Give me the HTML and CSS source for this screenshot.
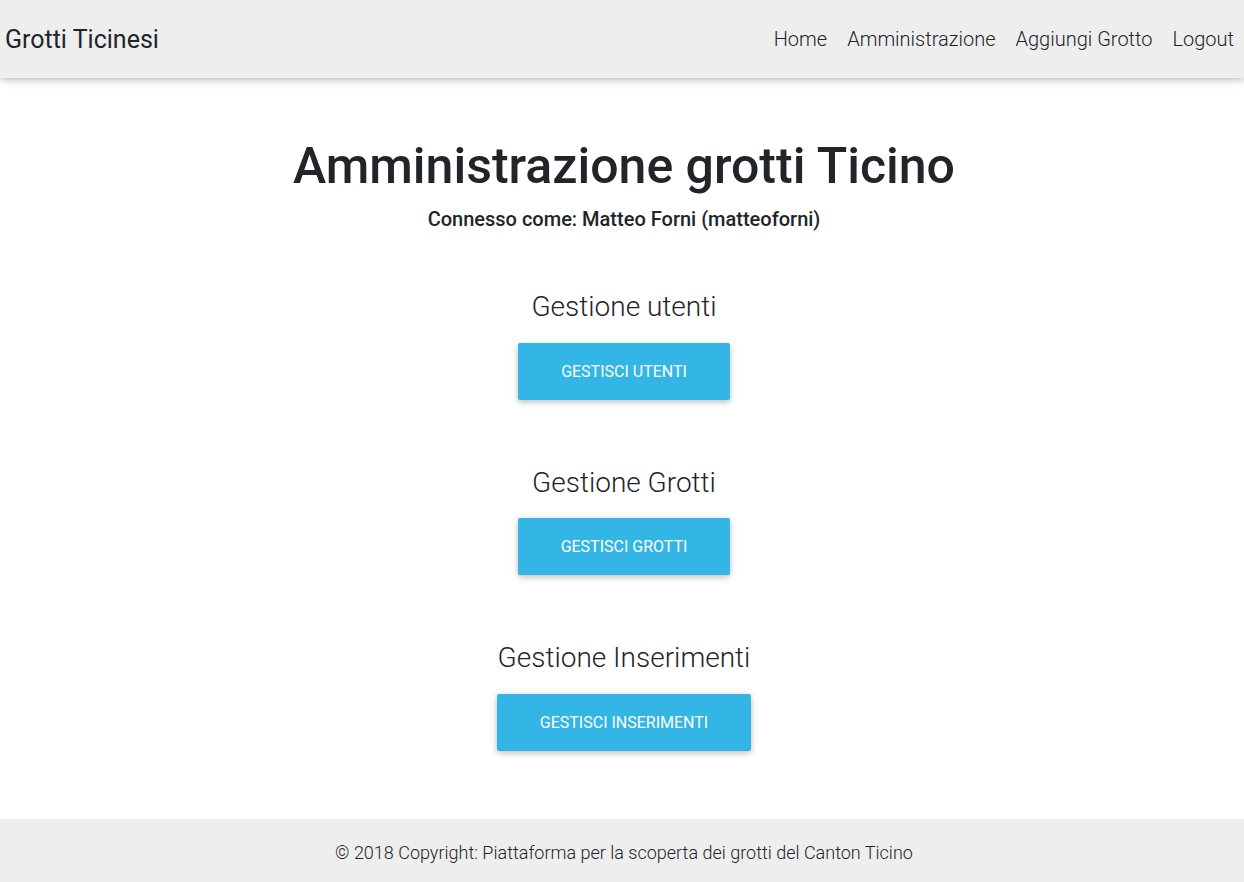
FILE: index.html
```html
<!DOCTYPE html>
<html lang="it">
<head>
<meta charset="utf-8">
<title>Grotti Ticinesi</title>
<link rel="stylesheet" href="styles.css">
</head>
<body>
<header class="navbar">
  <a class="brand" href="#">Grotti Ticinesi</a>
  <nav class="nav">
    <a href="#">Home</a>
    <a href="#">Amministrazione</a>
    <a href="#">Aggiungi Grotto</a>
    <a href="#">Logout</a>
  </nav>
</header>
<main class="main">
  <h1 class="title">Amministrazione grotti Ticino</h1>
  <p class="user">Connesso come: Matteo Forni (matteoforni)</p>
  <section class="section">
    <h3 class="sec-title">Gestione utenti</h3>
    <a class="btn" href="#">Gestisci utenti</a>
  </section>
  <section class="section">
    <h3 class="sec-title">Gestione Grotti</h3>
    <a class="btn" href="#">Gestisci grotti</a>
  </section>
  <section class="section">
    <h3 class="sec-title">Gestione Inserimenti</h3>
    <a class="btn" href="#">Gestisci inserimenti</a>
  </section>
</main>
<footer class="footer">© 2018 Copyright: Piattaforma per la scoperta dei grotti del Canton Ticino</footer>
</body>
</html>
```
FILE: styles.css
```css
* { box-sizing: border-box; }
html, body { margin: 0; padding: 0; }
body {
  font-family: Roboto, "Noto Sans", sans-serif;
  font-weight: 300;
  color: #212529;
  background: #fff;
  min-height: 882px;
  display: flex;
  flex-direction: column;
}
a { text-decoration: none; color: inherit; }
.navbar {
  height: 78px;
  flex: none;
  background: #eeeeee;
  display: flex;
  align-items: center;
  justify-content: space-between;
  padding: 0 10px 0 5px;
  box-shadow: 0 2px 5px 0 rgba(0,0,0,.16), 0 2px 10px 0 rgba(0,0,0,.12);
  position: relative;
  z-index: 2;
}
.brand {
  font-size: 25px;
  font-weight: 400;
  color: #212529;
}
.nav {
  display: flex;
  gap: 20px;
  font-size: 20px;
  font-weight: 300;
}
.nav a { color: #212529; }
.main {
  flex: 1;
  display: flex;
  flex-direction: column;
  align-items: center;
  padding: 58px 0 0 4px;
}
.title {
  margin: 0;
  font-size: 50px;
  font-weight: 500;
  line-height: 60px;
}
.user {
  margin: 8px 0 0;
  font-size: 20px;
  font-weight: 500;
  line-height: 30px;
}
.section {
  display: flex;
  flex-direction: column;
  align-items: center;
  margin-top: 56px;
}
.section + .section { margin-top: 66px; }
.sec-title {
  margin: 0 0 19px;
  font-size: 28px;
  font-weight: 300;
  line-height: 1.2;
}
.btn {
  display: inline-block;
  background: #33b5e5;
  color: #fff;
  font-size: 16px;
  font-weight: 400;
  text-transform: uppercase;
  padding: 19px 43px;
  line-height: 19px;
  border-radius: 2px;
  box-shadow: 0 2px 5px 0 rgba(0,0,0,.16), 0 2px 10px 0 rgba(0,0,0,.12);
}
.footer {
  flex: none;
  background: #eeeeee;
  height: 63px;
  display: flex;
  align-items: center;
  justify-content: center;
  padding: 3px 0 0 4px;
  font-size: 18px;
  font-weight: 300;
  margin-top: 68px;
}
```
